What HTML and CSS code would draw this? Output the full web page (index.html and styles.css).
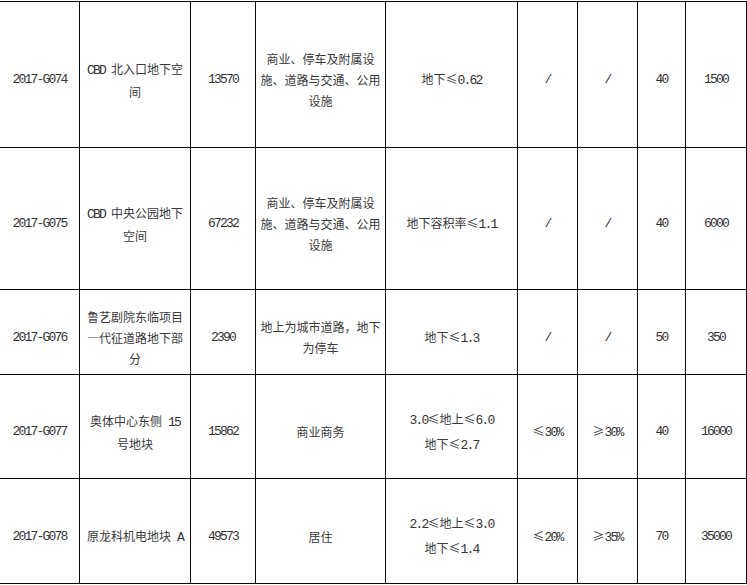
FILE: index.html
```html
<!DOCTYPE html>
<html lang="zh-CN">
<head>
<meta charset="utf-8">
<title>地块表</title>
<link rel="stylesheet" href="styles.css">
</head>
<body>
<div class="sheet">
  <div class="c c1 en"><div class="t">2017-G074</div></div>
  <div class="c c2"><div class="t"><span class="en">CBD </span>北入口地下空间</div></div>
  <div class="c c3 en"><div class="t">13570</div></div>
  <div class="c c4"><div class="t">商业、停车及附属设施、道路与交通、公用设施</div></div>
  <div class="c c5"><div class="t">地下≤<span class="en">0.62</span></div></div>
  <div class="c c6 en"><div class="t">/</div></div>
  <div class="c c7 en"><div class="t">/</div></div>
  <div class="c c8 en"><div class="t">40</div></div>
  <div class="c c9 en"><div class="t">1500</div></div>

  <div class="c c1 en"><div class="t">2017-G075</div></div>
  <div class="c c2"><div class="t"><span class="en">CBD </span>中央公园地下空间</div></div>
  <div class="c c3 en"><div class="t">67232</div></div>
  <div class="c c4"><div class="t">商业、停车及附属设施、道路与交通、公用设施</div></div>
  <div class="c c5"><div class="t">地下容积率≤<span class="en">1.1</span></div></div>
  <div class="c c6 en"><div class="t">/</div></div>
  <div class="c c7 en"><div class="t">/</div></div>
  <div class="c c8 en"><div class="t">40</div></div>
  <div class="c c9 en"><div class="t">6000</div></div>

  <div class="c c1 en"><div class="t">2017-G076</div></div>
  <div class="c c2"><div class="t">鲁艺剧院东临项目—代征道路地下部分</div></div>
  <div class="c c3 en"><div class="t">2390</div></div>
  <div class="c c4"><div class="t">地上为城市道路，地下为停车</div></div>
  <div class="c c5"><div class="t">地下≤<span class="en">1.3</span></div></div>
  <div class="c c6 en"><div class="t">/</div></div>
  <div class="c c7 en"><div class="t">/</div></div>
  <div class="c c8 en"><div class="t">50</div></div>
  <div class="c c9 en"><div class="t">350</div></div>

  <div class="c c1 en"><div class="t">2017-G077</div></div>
  <div class="c c2"><div class="t">奥体中心东侧<span class="en"> 15</span>号地块</div></div>
  <div class="c c3 en"><div class="t">15862</div></div>
  <div class="c c4"><div class="t">商业商务</div></div>
  <div class="c c5 two"><div class="t"><span class="en">3.0</span>≤地上≤<span class="en">6.0</span><br>地下≤<span class="en">2.7</span></div></div>
  <div class="c c6"><div class="t">≤<span class="en">30%</span></div></div>
  <div class="c c7"><div class="t">≥<span class="en">30%</span></div></div>
  <div class="c c8 en"><div class="t">40</div></div>
  <div class="c c9 en"><div class="t">16000</div></div>

  <div class="c c1 en"><div class="t">2017-G078</div></div>
  <div class="c c2"><div class="t">原龙科机电地块<span class="en"> A</span></div></div>
  <div class="c c3 en"><div class="t">49573</div></div>
  <div class="c c4"><div class="t">居住</div></div>
  <div class="c c5 two"><div class="t"><span class="en">2.2</span>≤地上≤<span class="en">3.0</span><br>地下≤<span class="en">1.4</span></div></div>
  <div class="c c6"><div class="t">≤<span class="en">20%</span></div></div>
  <div class="c c7"><div class="t">≥<span class="en">35%</span></div></div>
  <div class="c c8 en"><div class="t">70</div></div>
  <div class="c c9 en"><div class="t">35000</div></div>
</div>
</body>
</html>
```
FILE: styles.css
```css
html, body {
  margin: 0;
  padding: 0;
  background: #ffffff;
}

.sheet {
  margin-top: 1px;
  width: 747px;
  display: grid;
  grid-template-columns: 80px 111px 65px 130px 132px 60px 60px 48px 61px;
  grid-template-rows: 146px 142px 85px 104px 105px;
  border-top: 1px solid #0a0a0a;
}

.c {
  box-sizing: border-box;
  display: flex;
  align-items: center;
  justify-content: center;
  text-align: center;
  padding: 10px 6px 0;
  border-right: 1px solid #0a0a0a;
  border-bottom: 1px solid #0a0a0a;
  font-family: "Noto Sans CJK SC", sans-serif;
  font-size: 12px;
  line-height: 21px;
  color: #3a3a3a;
}

.c .t {
  width: 100%;
}

.c4 {
  padding-left: 4px;
  padding-right: 4px;
}

.two {
  line-height: 23px;
}

.en {
  font-family: "Liberation Mono", "Noto Sans CJK SC", monospace;
  font-size: 13px;
  letter-spacing: -1.8px;
  color: #333333;
}
```
